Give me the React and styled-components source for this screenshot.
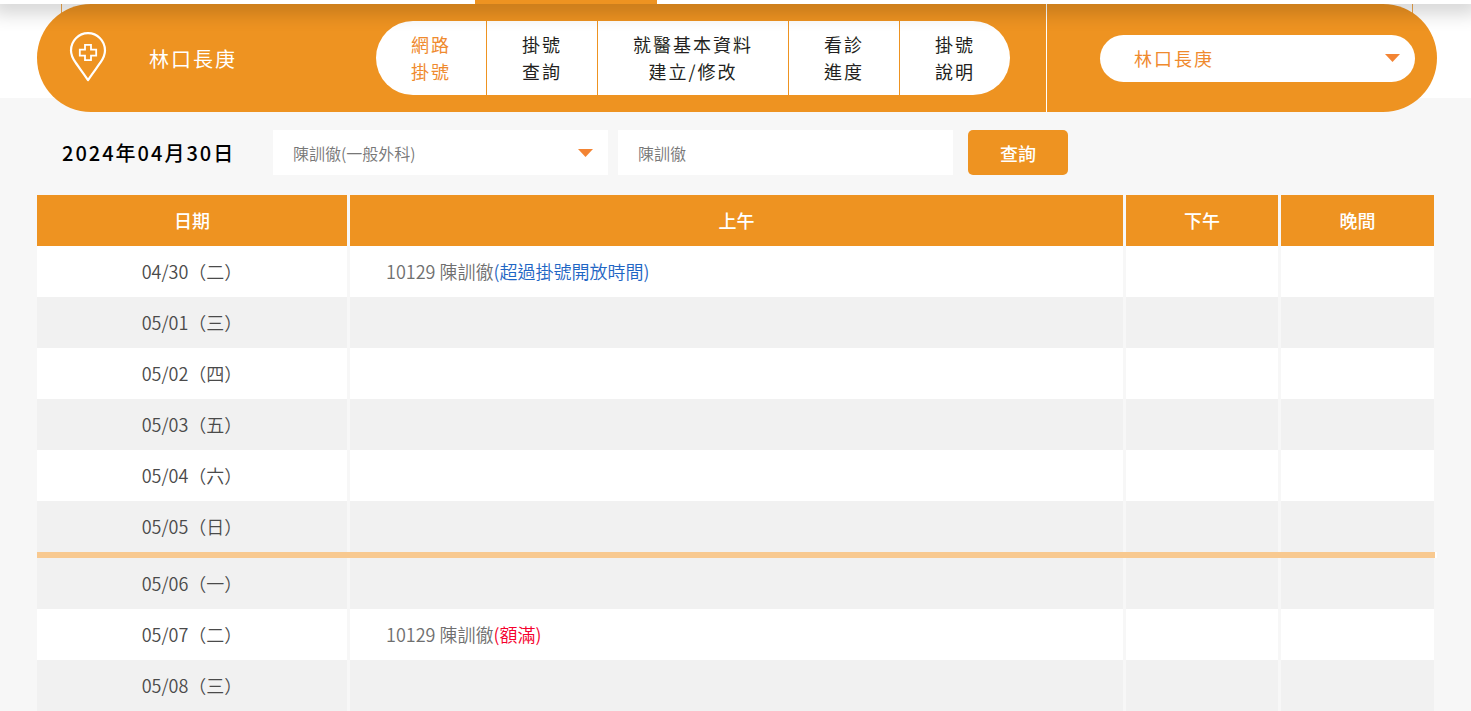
import React, { useState } from 'react';
import styled, { createGlobalStyle } from 'styled-components';

const GlobalStyle = createGlobalStyle`
  *, *::before, *::after {
    box-sizing: border-box;
  }

  body {
    margin: 0;
    background: #f7f7f7;
    color: #231f20;
    font-family: 'Noto Sans CJK TC', 'Noto Sans', sans-serif;
    font-size: 18px;
  }

  button, input, select {
    font-family: inherit;
  }
`;

const TopBar = styled.header`
  position: relative;
  z-index: 2;
  height: 4px;
  background: #fff;
  box-shadow: 0 0 20px 8px rgba(0, 0, 0, 0.2);
`;

const ActiveTab = styled.div`
  width: 182px;
  height: 100%;
  margin-left: 475px;
  background: #ee9321;
`;

const Hero = styled.section`
  position: relative;
  z-index: 1;
  padding: 0 34px 0 37px;
  background: linear-gradient(#fff 94px, #f7f7f7 94px);
`;

const Bar = styled.div`
  position: relative;
  display: flex;
  height: 108px;

  /* side rules of the menu panel, running behind the bar */
  &::before {
    content: '';
    position: absolute;
    z-index: -1;
    top: 0;
    left: 24px;
    right: 24px;
    height: 20px;
    border: solid #ee9321;
    border-width: 0 1px;
    opacity: 0.8;
  }
`;

const BarMain = styled.div`
  flex: 1;
  display: flex;
  align-items: center;
  padding-right: 36px;
  border-right: 1px solid #fff;
  border-radius: 54px 0 0 54px;
  background: #ee9321;
  background-clip: padding-box;
`;

const BarSide = styled.div`
  width: 390px;
  display: flex;
  align-items: center;
  padding: 0 22px 0 53px;
  border-radius: 0 54px 54px 0;
  background: #ee9321;
`;

const Brand = styled.div`
  flex: 1;
  display: flex;
  align-items: center;
  gap: 42px;
  padding-left: 32px;
  color: #fff;
  font-size: 20px;
  letter-spacing: 2px;

  svg {
    display: block;
  }
`;

const Menu = styled.nav`
  display: flex;
  height: 74px;
  overflow: hidden;
  border-radius: 37px;
  background: #fff;
`;

const MenuLink = styled.a`
  display: flex;
  align-items: center;
  justify-content: center;
  width: ${({ $wide }) => ($wide ? '191px' : '111px')};
  border-right: 1px solid #ee9321;
  color: ${({ $active }) => ($active ? '#ef8a2e' : '#231f20')};
  line-height: 27px;
  letter-spacing: 2px;
  text-align: center;
  text-decoration: none;

  &:last-child {
    width: 110px;
    border-right: none;
  }
`;

const SelectBox = styled.div`
  position: relative;
  width: ${({ $pill }) => ($pill ? '100%' : '335px')};

  svg {
    position: absolute;
    top: 50%;
    right: 15px;
    transform: translateY(-50%);
    pointer-events: none;
  }
`;

const Select = styled.select`
  display: block;
  width: 100%;
  height: 45px;
  padding: 0 40px 0 20px;
  appearance: none;
  border: none;
  border-radius: 0;
  background: #fff;
  color: #777;
  font-size: 16px;
  font-weight: 350;
`;

const PillSelect = styled(Select)`
  height: 47px;
  padding-left: 34px;
  border-radius: 24px;
  color: #ef8a2e;
  font-size: 18px;
  font-weight: 400;
  letter-spacing: 2px;
`;

const Main = styled.main`
  padding: 0 34px 0 37px;
`;

const Filters = styled.form`
  display: flex;
  align-items: center;
  gap: 10px;
  padding: 18px 0 20px;
`;

const Today = styled.h2`
  width: 226px;
  margin: 0;
  padding-left: 25px;
  color: #000;
  font-size: 20px;
  font-weight: 500;
  letter-spacing: 2px;
  white-space: nowrap;
`;

const TextInput = styled.input`
  width: 335px;
  height: 45px;
  padding: 0 20px;
  border: none;
  background: #fff;
  color: #777;
  font-size: 16px;
  font-weight: 350;
`;

const SearchButton = styled.button`
  width: 100px;
  height: 45px;
  margin-left: 5px;
  border: none;
  border-radius: 5px;
  background: #ee9321;
  color: #fff;
  font-size: 18px;
  font-weight: 500;
  cursor: pointer;
`;

const Table = styled.table`
  width: 100%;
  table-layout: fixed;
  border-spacing: 0;
  line-height: 27px;
`;

const HeadCell = styled.th`
  width: ${({ $width }) => $width || 'auto'};
  height: 51px;
  padding: 0;
  border-right: 3px solid #f7f7f7;
  background: #ee9321;
  color: #fff;
  font-weight: 500;
`;

const Row = styled.tr`
  background: ${({ $shaded }) => ($shaded ? '#f1f1f1' : '#fff')};
`;

const Cell = styled.td`
  height: 51px;
  padding: 0 36px;
  border-right: 3px solid #f7f7f7;
  color: #6f6f6f;
  font-weight: 350;
`;

const DateCell = styled(Cell)`
  padding: 0;
  color: #4a4a4a;
  font-family: 'Noto Sans CJK JP', 'Noto Sans CJK TC', sans-serif;
  text-align: center;
`;

const WeekLine = styled.td`
  height: 6px;
  padding: 0;
  border-right: 2px solid #fff;
  background: #f8c990;
`;

const Status = styled.span`
  color: ${({ $full }) => ($full ? '#f5002d' : '#1f66c4')};
`;

const menu = [
  { lines: ['網路', '掛號'], active: true },
  { lines: ['掛號', '查詢'] },
  { lines: ['就醫基本資料', '建立/修改'], wide: true },
  { lines: ['看診', '進度'] },
  { lines: ['掛號', '說明'] },
];

const days = [
  { date: '04/30（二）', clinic: '10129 陳訓徹', status: '(超過掛號開放時間)' },
  { date: '05/01（三）', shaded: true },
  { date: '05/02（四）' },
  { date: '05/03（五）', shaded: true },
  { date: '05/04（六）' },
  { date: '05/05（日）', shaded: true, endOfWeek: true },
  { date: '05/06（一）', shaded: true },
  { date: '05/07（二）', clinic: '10129 陳訓徹', status: '(額滿)', full: true },
  { date: '05/08（三）', shaded: true },
];

const PinIcon = () => (
  <svg width="38" height="52" viewBox="0 0 38 52" fill="none" stroke="#fff" aria-hidden="true">
    <path
      d="M19 48.2C15.5 42.8 10.5 36.4 6.5 30.4C3.5 26 2 22.6 2 18.4C2 8.8 9.6 1.2 19 1.2S36 8.8 36 18.4C36 22.6 34.5 26 31.5 30.4C27.5 36.4 22.5 42.8 19 48.2Z"
      strokeWidth="2.2"
      strokeLinejoin="round"
    />
    <path
      d="M16 12.8H22V17.6H27.2V23.6H22V28.2H16V23.6H10.8V17.6H16Z"
      strokeWidth="1.8"
    />
  </svg>
);

const Arrow = () => (
  <svg width="15" height="8" viewBox="0 0 15 8" aria-hidden="true">
    <path d="M0 0H15L7.5 8Z" fill="#f38433" />
  </svg>
);

const App = () => {
  const [name, setName] = useState('陳訓徹');

  return (
    <>
      <GlobalStyle />
      <TopBar>
        <ActiveTab />
      </TopBar>

      <Hero>
        <Bar>
          <BarMain>
            <Brand>
              <PinIcon />
              <span>林口長庚</span>
            </Brand>
            <Menu>
              {menu.map(({ lines, active, wide }) => (
                <MenuLink key={lines.join('')} href="#" $active={active} $wide={wide}>
                  <span>
                    {lines[0]}
                    <br />
                    {lines[1]}
                  </span>
                </MenuLink>
              ))}
            </Menu>
          </BarMain>
          <BarSide>
            <SelectBox $pill>
              <PillSelect aria-label="院區">
                <option>林口長庚</option>
              </PillSelect>
              <Arrow />
            </SelectBox>
          </BarSide>
        </Bar>
      </Hero>

      <Main>
        <Filters onSubmit={(e) => e.preventDefault()}>
          <Today>2024年04月30日</Today>
          <SelectBox>
            <Select aria-label="醫師">
              <option>陳訓徹(一般外科)</option>
            </Select>
            <Arrow />
          </SelectBox>
          <TextInput
            type="text"
            aria-label="醫師姓名"
            value={name}
            onChange={(e) => setName(e.target.value)}
          />
          <SearchButton type="submit">查詢</SearchButton>
        </Filters>

        <Table>
          <thead>
            <tr>
              <HeadCell $width="313px">日期</HeadCell>
              <HeadCell>上午</HeadCell>
              <HeadCell $width="155px">下午</HeadCell>
              <HeadCell $width="156px">晚間</HeadCell>
            </tr>
          </thead>
          <tbody>
            {days.map((day) => (
              <React.Fragment key={day.date}>
                <Row $shaded={day.shaded}>
                  <DateCell>{day.date}</DateCell>
                  <Cell>
                    {day.clinic}
                    {day.status && <Status $full={day.full}>{day.status}</Status>}
                  </Cell>
                  <Cell />
                  <Cell />
                </Row>
                {day.endOfWeek && (
                  <tr>
                    <WeekLine colSpan={4} />
                  </tr>
                )}
              </React.Fragment>
            ))}
          </tbody>
        </Table>
      </Main>
    </>
  );
};

export default App;
